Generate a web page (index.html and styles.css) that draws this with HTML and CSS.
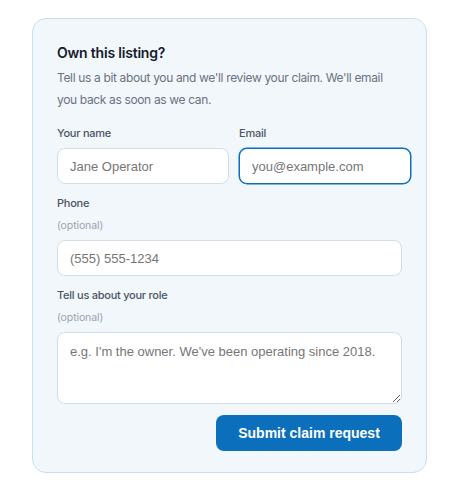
FILE: index.html
```html
<!DOCTYPE html>
<html lang="en">
<head>
    <meta charset="UTF-8">
    <title>Claim listing</title>
    <meta name="viewport" content="width=device-width, initial-scale=1.0">
    <link rel="stylesheet" href="styles.css">
</head>
<body>
    <form class="claim-card">
        <h2 class="claim-title">Own this listing?</h2>
        <p class="claim-intro">Tell us a bit about you and we'll review your claim. We'll email you back as soon as we can.</p>

        <div class="field-row">
            <div class="field">
                <label class="field-label" for="name">Your name</label>
                <input class="field-input" id="name" type="text" placeholder="Jane Operator">
            </div>
            <div class="field">
                <label class="field-label" for="email">Email</label>
                <input class="field-input is-focused" id="email" type="email" placeholder="you@example.com">
            </div>
        </div>

        <div class="field">
            <label class="field-label" for="phone">Phone</label>
            <span class="field-hint">(optional)</span>
            <input class="field-input" id="phone" type="tel" placeholder="(555) 555-1234">
        </div>

        <div class="field">
            <label class="field-label" for="role">Tell us about your role</label>
            <span class="field-hint">(optional)</span>
            <textarea class="field-input field-area" id="role" placeholder="e.g. I'm the owner. We've been operating since 2018."></textarea>
        </div>

        <div class="actions">
            <button class="submit-btn" type="button">Submit claim request</button>
        </div>
    </form>
</body>
</html>
```

FILE: styles.css
```css
body {
    margin: 0;
    padding: 18px 0;
    background: #fff;
    font-family: Inter, 'Noto Sans', sans-serif;
    display: flex;
    justify-content: center;
}
.claim-card {
    width: 395px;
    box-sizing: border-box;
    background: #f2f7fc;
    border: 1px solid #c9dff0;
    border-radius: 14px;
    padding: 24px 24px 21px 24px;
    display: flex;
    flex-direction: column;
    gap: 11px;
}
.claim-title {
    margin: 0;
    font-size: 14px;
    line-height: 20px;
    font-weight: 600;
    letter-spacing: -0.2px;
    color: #141b2b;
}
.claim-intro {
    margin: -7px 0 3px 0;
    font-size: 12px;
    line-height: 22px;
    letter-spacing: -0.35px;
    color: #6b7280;
}
.field-row {
    display: grid;
    grid-template-columns: 172px 172px;
    gap: 10px;
}
.field {
    display: flex;
    flex-direction: column;
}
.field-label {
    font-size: 11px;
    line-height: 16px;
    font-weight: 500;
    letter-spacing: -0.25px;
    color: #4b5563;
    margin-bottom: 7px;
}
.field-hint {
    font-size: 10.5px;
    line-height: 16px;
    letter-spacing: -0.1px;
    color: #9ca3af;
    margin-bottom: 6px;
}
.field-input {
    height: 36px;
    box-sizing: border-box;
    border: 1px solid #d3dde9;
    border-radius: 8px;
    background: #fff;
    padding: 0 12px;
    font-family: 'Liberation Sans', Arial, sans-serif;
    font-size: 13px;
    color: #1f2937;
    outline: none;
}
.field-input::placeholder {
    color: #767676;
}
.field-input.is-focused {
    border-color: #0b6fbb;
    box-shadow: 0 0 0 0.5px #0b6fbb;
}
.field-area {
    height: 72px;
    padding: 10px 12px;
    line-height: 18px;
    resize: vertical;
}
.actions {
    display: flex;
    justify-content: flex-end;
}
.submit-btn {
    width: 186px;
    height: 36px;
    border: none;
    border-radius: 8px;
    background: #0b6fbb;
    color: #fff;
    font-family: 'Liberation Sans', Arial, sans-serif;
    font-size: 14px;
    font-weight: 700;
    cursor: pointer;
}
```
